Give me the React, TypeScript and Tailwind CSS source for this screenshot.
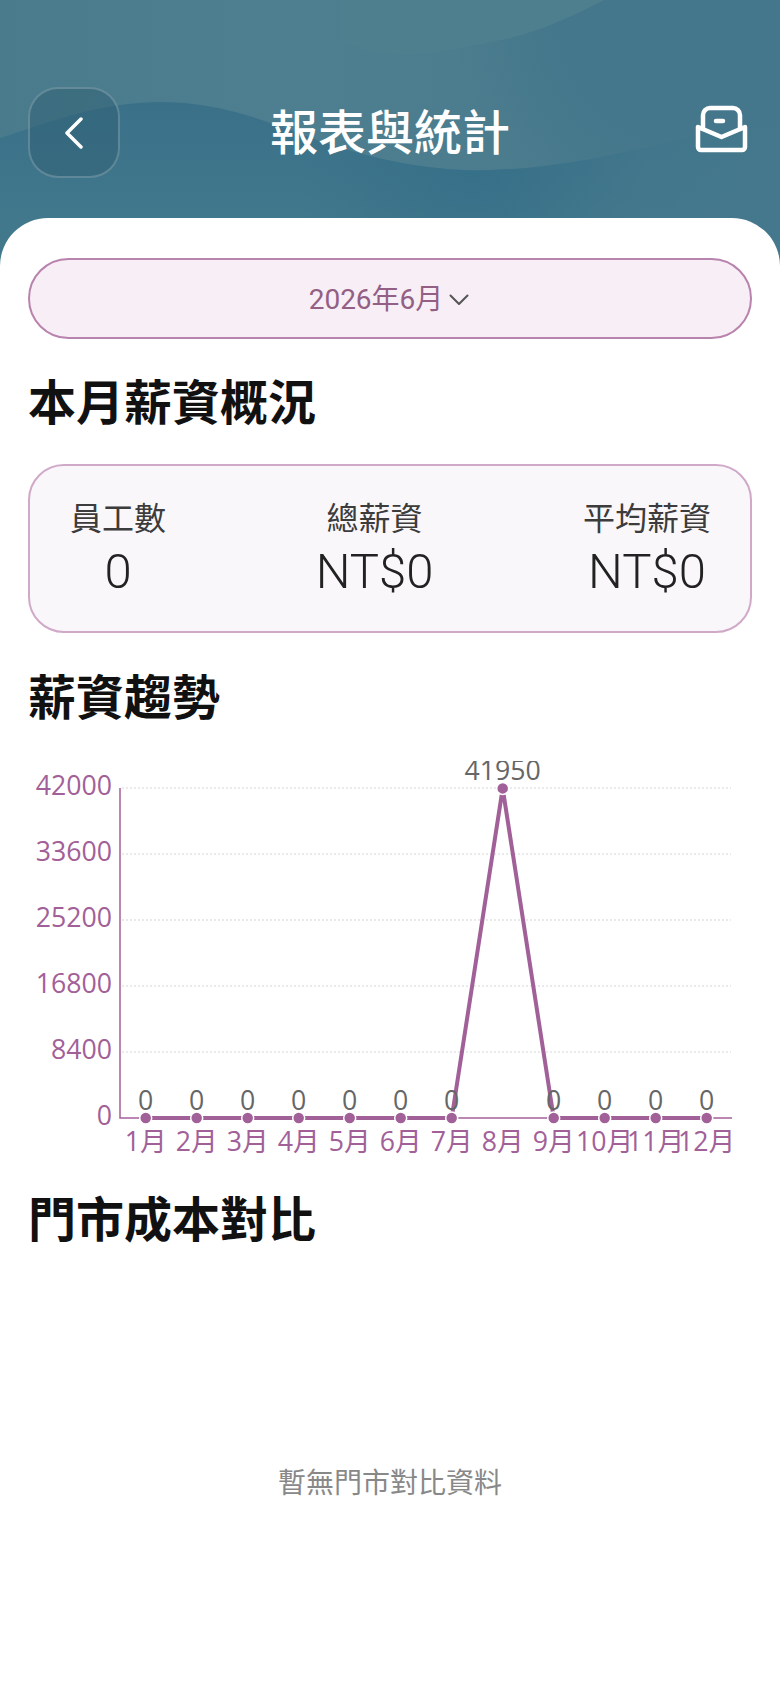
const font = "font-['Roboto','Noto_Sans_CJK_TC',sans-serif]";

const yTicks = [
  { label: "42000", y: 788 },
  { label: "33600", y: 854 },
  { label: "25200", y: 920 },
  { label: "16800", y: 986 },
  { label: "8400", y: 1052 },
  { label: "0", y: 1118 },
];

const months = ["1月", "2月", "3月", "4月", "5月", "6月", "7月", "8月", "9月", "10月", "11月", "12月"];
const values = [0, 0, 0, 0, 0, 0, 0, 41950, 0, 0, 0, 0];

function TrendChart() {
  const px = (i: number) => 145.7 + i * 51;
  const py = (v: number) => 1118 - (v / 42000) * 330;
  const line = values.map((v, i) => `${px(i)},${py(v)}`).join(" ");

  return (
    <svg viewBox="28 761 724 394" className="block h-[394px] w-[724px] font-['Open_Sans','Noto_Sans_CJK_TC',sans-serif]">
      {yTicks.slice(0, 5).map((t) => (
        <line key={t.y} x1="122" x2="731" y1={t.y} y2={t.y} stroke="#eaeaea" strokeWidth="2" strokeDasharray="2 2" />
      ))}
      <path d="M120 788V1118H732" fill="none" stroke="#a26098" strokeWidth="1.5" />
      <polyline points={line} fill="none" stroke="#a26098" strokeWidth="4" />
      {yTicks.map((t) => (
        <text key={t.label} x="112" y={t.y + 7} textAnchor="end" fontSize="26.7" fill="#a26098">
          {t.label}
        </text>
      ))}
      {values.map((v, i) => (
        <g key={i}>
          <circle cx={px(i)} cy={py(v)} r="6" fill="#a26098" stroke="#ffffff" strokeWidth="1.5" />
          <text x={px(i)} y={py(v) - 8} textAnchor="middle" fontSize="26.7" fill="#666666">
            {v}
          </text>
          <text x={px(i)} y="1151" textAnchor="middle" fontSize="26.7" fill="#a26098">
            {months[i]}
          </text>
        </g>
      ))}
    </svg>
  );
}

function Stat({ label, value }: { label: string; value: string }) {
  return (
    <div className="flex flex-col items-center">
      <div className="mb-[3px] text-[32px] leading-[44px] text-[#3c3c3c]">{label}</div>
      <div className="text-[49px] font-[350] leading-[56px] text-[#222222]">{value}</div>
    </div>
  );
}

function HeaderWaves() {
  const wave =
    "M0 138C50 122 100 102 160 102C215 102 260 118 317 140C380 162 440 172 490 170C560 168 620 154 690 137C720 131 750 127 780 126V266H0Z";

  return (
    <svg viewBox="0 0 780 266" className="absolute inset-0 h-full w-full">
      <defs>
        <linearGradient id="upper" x1="0" y1="0" x2="780" y2="0" gradientUnits="userSpaceOnUse">
          <stop offset="0" stopColor="#4a7b8c" />
          <stop offset="0.35" stopColor="#4e7f90" />
          <stop offset="0.7" stopColor="#4b7c8e" />
          <stop offset="1" stopColor="#46798c" />
        </linearGradient>
        <radialGradient id="shade" cx="690" cy="10" r="240" gradientUnits="userSpaceOnUse">
          <stop offset="0" stopColor="#44778b" />
          <stop offset="0.55" stopColor="#44778b" />
          <stop offset="1" stopColor="#44778b" stopOpacity="0" />
        </radialGradient>
        <linearGradient id="lower" x1="0" y1="105" x2="0" y2="220" gradientUnits="userSpaceOnUse">
          <stop offset="0" stopColor="#3a7189" />
          <stop offset="1" stopColor="#42788c" />
        </linearGradient>
        <radialGradient id="deep" cx="470" cy="172" r="170" gradientUnits="userSpaceOnUse">
          <stop offset="0" stopColor="#316c87" stopOpacity="0.6" />
          <stop offset="1" stopColor="#316c87" stopOpacity="0" />
        </radialGradient>
        <linearGradient id="lowerFade" x1="520" y1="0" x2="780" y2="0" gradientUnits="userSpaceOnUse">
          <stop offset="0" stopColor="#45788c" stopOpacity="0" />
          <stop offset="1" stopColor="#45788c" />
        </linearGradient>
      </defs>
      <rect width="780" height="266" fill="url(#upper)" />
      <rect width="780" height="266" fill="url(#shade)" />
      <path d="M340 0H604C570 18 530 36 490 42C460 49 430 54 400 55C380 55 360 50 340 40Z" fill="#4e7f8f" />
      <path d={wave} fill="url(#lower)" />
      <path d={wave} fill="url(#deep)" />
      <path d={wave} fill="url(#lowerFade)" />
    </svg>
  );
}

export default function App() {
  return (
    <div className={`min-h-[1688px] w-[780px] overflow-hidden bg-white ${font}`}>
      <header className="relative h-[266px] bg-[#41778c]">
        <HeaderWaves />
        <div className="relative flex items-start justify-between pl-[28px] pr-[29px] pt-[87px]">
          <button className="flex h-[91px] w-[92px] items-center justify-center rounded-[30px] border-2 border-white/20 bg-[#2f5f74]/50">
            <svg width="20" height="32" viewBox="0 0 20 32" fill="none" stroke="#ffffff" strokeWidth="3.5" strokeLinecap="round" strokeLinejoin="round">
              <path d="M17 2L3 16l14 14" />
            </svg>
          </button>
          <h1 className="absolute left-0 right-0 top-[102px] text-center text-[48px] font-medium leading-[64px] text-white">報表與統計</h1>
          <svg width="60" height="60" viewBox="690 100 60 60" fill="none" stroke="#ffffff" strokeWidth="4.5" strokeLinecap="round" strokeLinejoin="round" className="mt-[13px]">
            <path d="M702 129V115a7 7 0 0 1 7-7h23a7 7 0 0 1 7 7v14" />
            <path d="M697 127V147a3 3 0 0 0 3 3h41a3 3 0 0 0 3-3V127L720.5 137Z" />
            <path d="M715 121h7" />
          </svg>
        </div>
      </header>

      <main className="relative -mt-12 rounded-t-[48px] bg-white px-[28px] pt-[40px]">
        <button className="flex h-[81px] w-full items-center justify-center gap-[6px] rounded-full border-2 border-[#b883ad] bg-[#f8eef6] pr-[2px] pt-[2px] text-[28px] text-[#935f84]">
          2026年6月
          <svg width="20" height="12" viewBox="0 0 20 12" fill="none" stroke="#555555" strokeWidth="2" strokeLinecap="round" strokeLinejoin="round">
            <path d="M1.5 1.5L10 10l8.5-8.5" />
          </svg>
        </button>

        <h2 className="flex h-[125px] items-center pt-[4px] text-[48px] font-bold text-[#111111]">本月薪資概況</h2>

        <section className="flex h-[169px] items-center justify-between rounded-[36px] border-2 border-[#d0a9c8] bg-[#faf7fb] pl-[40px] pr-[39px]">
          <Stat label="員工數" value="0" />
          <Stat label="總薪資" value="NT$0" />
          <Stat label="平均薪資" value="NT$0" />
        </section>

        <h2 className="flex h-[128px] items-center pt-[4px] text-[48px] font-bold text-[#111111]">薪資趨勢</h2>

        <TrendChart />

        <h2 className="flex h-[128px] items-center pt-[3px] text-[48px] font-bold text-[#111111]">門市成本對比</h2>

        <div className="flex h-[400px] items-center justify-center pt-[2px] text-[28px] text-[#888888]">暫無門市對比資料</div>
      </main>
    </div>
  );
}
